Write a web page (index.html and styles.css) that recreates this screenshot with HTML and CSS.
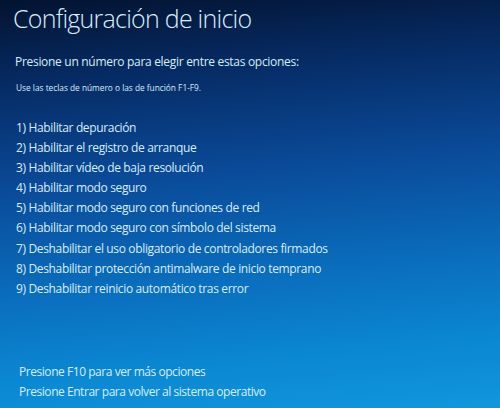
FILE: index.html
```html
<!DOCTYPE html>
<html lang="es">
<head>
<meta charset="utf-8">
<title>Configuración de inicio</title>
<link rel="stylesheet" href="styles.css">
</head>
<body>
<main class="screen">
  <h1 class="title">Configuración de inicio</h1>
  <p class="prompt">Presione un número para elegir entre estas opciones:</p>
  <p class="hint">Use las teclas de número o las de función F1-F9.</p>
  <ol class="options">
    <li>1) Habilitar depuración</li>
    <li>2) Habilitar el registro de arranque</li>
    <li>3) Habilitar vídeo de baja resolución</li>
    <li>4) Habilitar modo seguro</li>
    <li>5) Habilitar modo seguro con funciones de red</li>
    <li>6) Habilitar modo seguro con símbolo del sistema</li>
    <li>7) Deshabilitar el uso obligatorio de controladores firmados</li>
    <li>8) Deshabilitar protección antimalware de inicio temprano</li>
    <li>9) Deshabilitar reinicio automático tras error</li>
  </ol>
  <div class="footer">
    <p>Presione F10 para ver más opciones</p>
    <p>Presione Entrar para volver al sistema operativo</p>
  </div>
</main>
</body>
</html>
```
FILE: styles.css
```css
html, body {
  margin: 0;
  padding: 0;
  height: 100%;
}
body {
  background: linear-gradient(175deg, #031330 0%, #062a62 18%, #0a4a98 42%, #0a6cbc 65%, #0b88d2 85%, #1196dc 100%);
  color: #d8eef8;
  font-family: "Open Sans", "Noto Sans", sans-serif;
  overflow: hidden;
}
.screen {
  height: 408px;
  display: flex;
  flex-direction: column;
  padding: 0 0 0 13px;
  box-sizing: border-box;
}
.title {
  margin: 0;
  font-size: 25px;
  font-weight: 300;
  line-height: 36px;
  letter-spacing: -0.75px;
}
.prompt {
  margin: 17px 0 0 2px;
  font-size: 12px;
  line-height: 18px;
  letter-spacing: -0.3px;
}
.hint {
  margin: 11px 0 0 3px;
  font-size: 8.3px;
  line-height: 12px;
}
.options {
  list-style: none;
  margin: 24px 0 0 3px;
  padding: 0;
  font-size: 12px;
  letter-spacing: -0.35px;
}
.options li {
  line-height: 20.1px;
}
.footer {
  margin: auto 0 6px 6px;
  font-size: 12px;
  letter-spacing: -0.45px;
}
.footer p {
  margin: 0;
  line-height: 20px;
}
```
